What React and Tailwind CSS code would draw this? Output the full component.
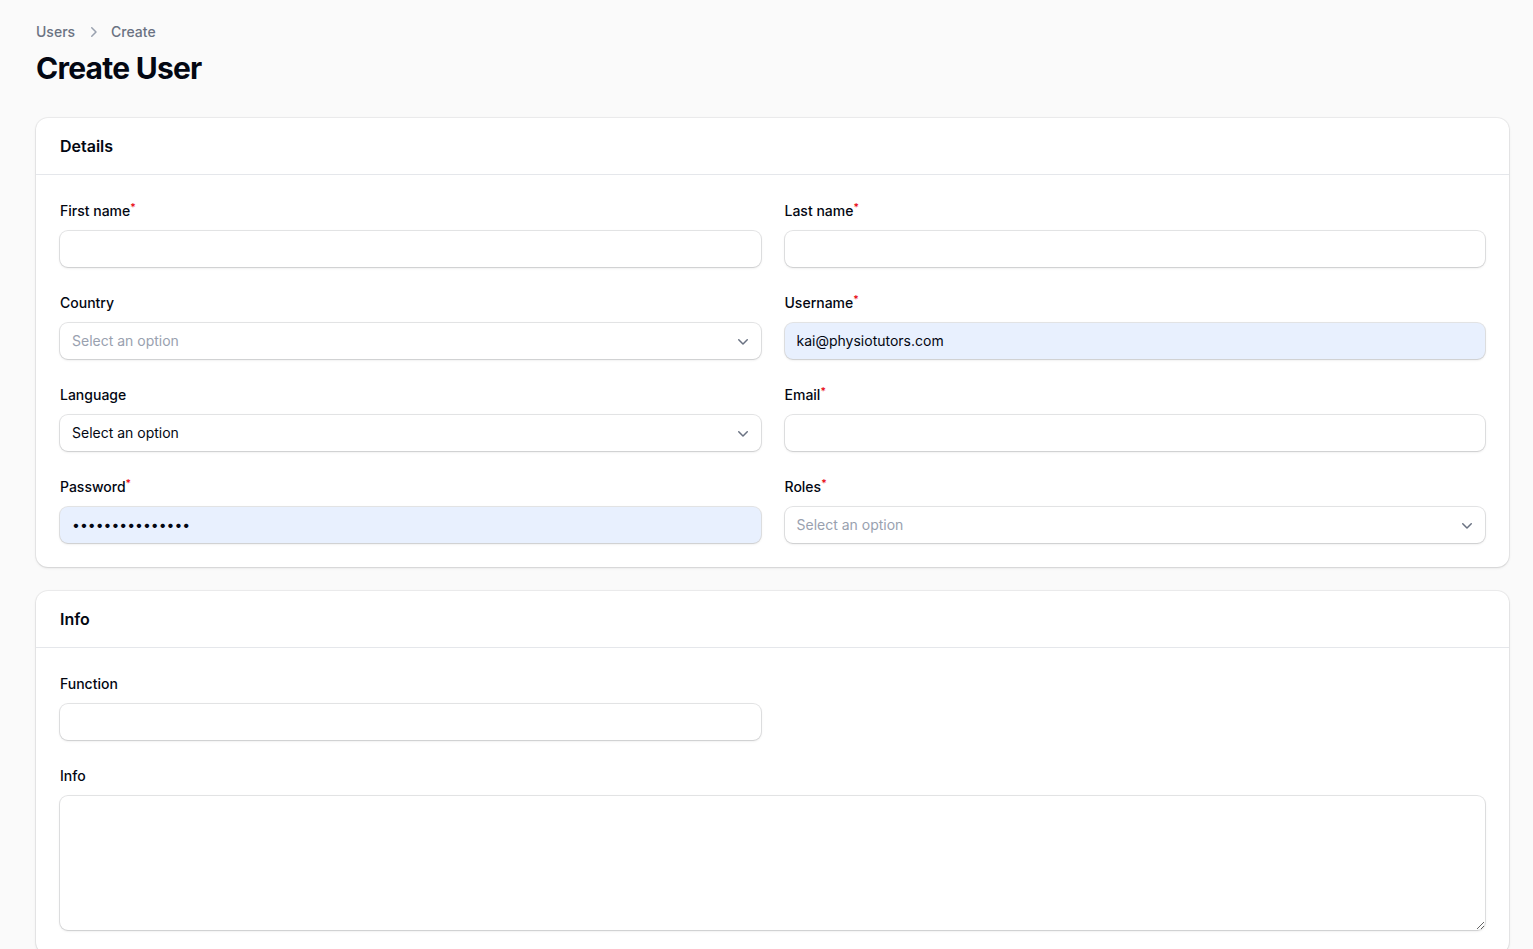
import React from "react";

const font = { fontFamily: "Inter, 'Noto Sans', sans-serif" };

function Label({ children, required }) {
  return (
    <label className="block text-sm leading-6 font-medium text-gray-950">
      {children}
      {required && <sup className="text-red-600 font-medium">*</sup>}
    </label>
  );
}

function Input({ value, autofill, type = "text" }) {
  return (
    <div
      className={`flex h-9 items-center rounded-lg shadow-sm ring-1 ring-gray-950/10 ${
        autofill ? "bg-[#e8f0fe]" : "bg-white"
      }`}
    >
      <input
        type={type}
        defaultValue={value}
        className="w-full bg-transparent px-3 text-sm text-gray-950 outline-none"
        style={font}
      />
    </div>
  );
}

function Chevron() {
  return (
    <svg viewBox="0 0 20 20" className="h-5 w-5 text-gray-500" fill="currentColor">
      <path
        fillRule="evenodd"
        d="M5.22 8.22a.75.75 0 0 1 1.06 0L10 11.940l3.72-3.72a.75.75 0 1 1 1.06 1.06l-4.25 4.25a.75.75 0 0 1-1.06 0L5.22 9.28a.75.75 0 0 1 0-1.06Z"
        clipRule="evenodd"
      />
    </svg>
  );
}

function Select({ dark }) {
  return (
    <div className="flex h-9 items-center justify-between rounded-lg bg-white pl-3 pr-2 shadow-sm ring-1 ring-gray-950/10">
      <span className={`text-sm ${dark ? "text-gray-950" : "text-gray-400"}`}>Select an option</span>
      <Chevron />
    </div>
  );
}

function Field({ label, required, children }) {
  return (
    <div className="flex flex-col gap-2">
      <Label required={required}>{label}</Label>
      {children}
    </div>
  );
}

function Card({ title, children }) {
  return (
    <section className="rounded-xl bg-white shadow-sm ring-1 ring-gray-950/5">
      <header className="flex h-[57px] items-center border-b border-gray-200 px-6">
        <h3 className="text-base font-semibold text-gray-950">{title}</h3>
      </header>
      <div className="p-6">{children}</div>
    </section>
  );
}

export default function App() {
  return (
    <div className="min-h-screen bg-[#fafafa] pl-9 pr-6 pt-[22px]" style={font}>
      <nav className="flex items-center gap-x-2 text-sm font-medium text-gray-500">
        <span>Users</span>
        <svg viewBox="0 0 20 20" className="h-5 w-5 text-gray-400" fill="currentColor">
          <path
            fillRule="evenodd"
            d="M8.22 5.22a.75.75 0 0 1 1.06 0l4.25 4.25a.75.75 0 0 1 0 1.06l-4.25 4.25a.75.75 0 0 1-1.06-1.06L11.94 10 8.22 6.28a.75.75 0 0 1 0-1.06Z"
            clipRule="evenodd"
          />
        </svg>
        <span>Create</span>
      </nav>
      <h1 className="mt-2 text-3xl font-bold tracking-tight text-gray-950">Create User</h1>

      <div className="mt-8 flex flex-col gap-6">
        <Card title="Details">
          <div className="grid grid-cols-2 gap-6">
            <Field label="First name" required>
              <Input />
            </Field>
            <Field label="Last name" required>
              <Input />
            </Field>
            <Field label="Country">
              <Select />
            </Field>
            <Field label="Username" required>
              <Input value="kai@physiotutors.com" autofill />
            </Field>
            <Field label="Language">
              <Select dark />
            </Field>
            <Field label="Email" required>
              <Input />
            </Field>
            <Field label="Password" required>
              <Input type="password" value="•••••••••••••••" autofill />
            </Field>
            <Field label="Roles" required>
              <Select />
            </Field>
          </div>
        </Card>

        <Card title="Info">
          <div className="grid grid-cols-2 gap-6">
            <Field label="Function">
              <Input />
            </Field>
            <div />
            <div className="col-span-2">
              <Field label="Info">
                <textarea
                  className="block h-[134px] w-full rounded-lg bg-white px-3 py-2 text-sm shadow-sm outline-none ring-1 ring-gray-950/10"
                  style={font}
                />
              </Field>
            </div>
          </div>
        </Card>
      </div>
    </div>
  );
}
